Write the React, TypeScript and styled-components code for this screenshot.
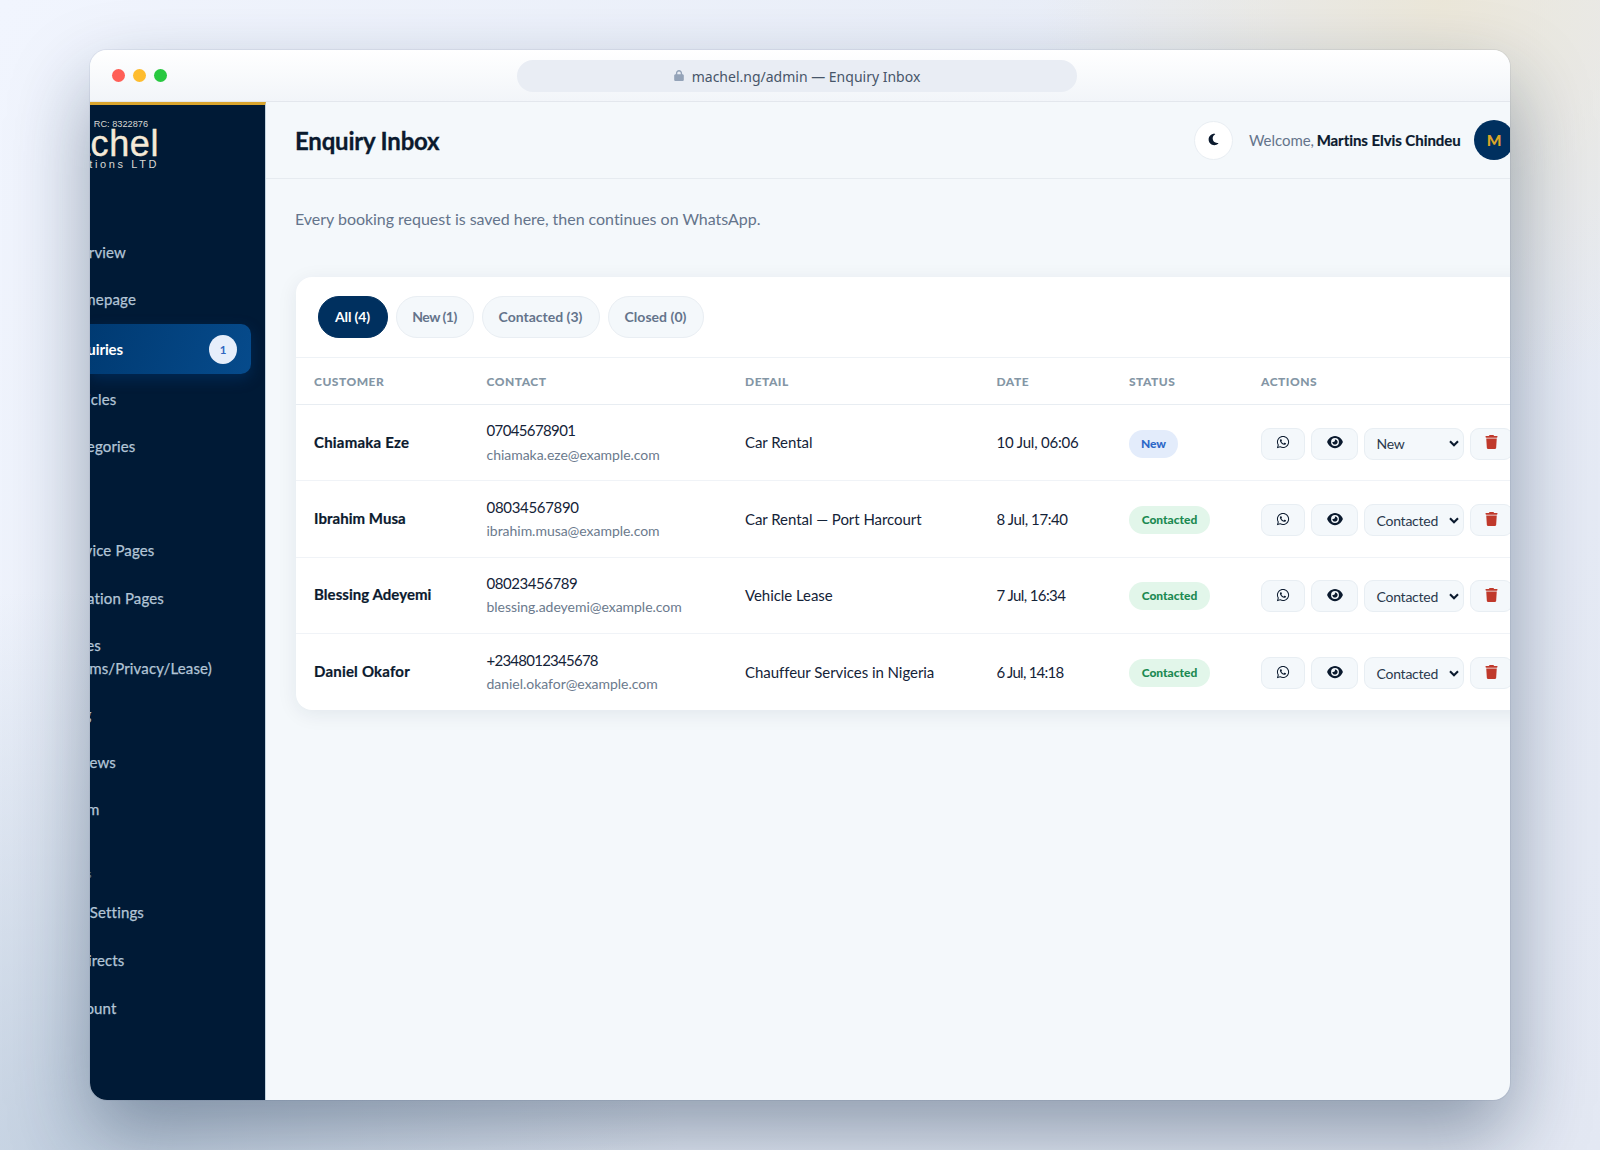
import React from "react";
import styled, { createGlobalStyle, css } from "styled-components";
import { FaEye, FaLock, FaMoon, FaTrash, FaWhatsapp } from "react-icons/fa6";

const GlobalStyle = createGlobalStyle`
  *, *::before, *::after { box-sizing: border-box; }
  body { margin: 0; overflow: hidden; }
`;

const Desktop = styled.div`
  width: 1600px;
  height: 1150px;
  padding: 50px 90px;
  overflow: hidden;
  font-family: Lato, "Liberation Sans", sans-serif;
  color: #0b1a2e;
  background:
    radial-gradient(circle at 1440px 0px, rgba(236, 230, 212, 0.85) 0, rgba(236, 230, 212, 0) 400px),
    radial-gradient(ellipse 620px 560px at 60px 1150px, rgba(182, 198, 216, 0.75) 0, rgba(182, 198, 216, 0) 100%),
    linear-gradient(120deg, #f1f5fe 0%, #e9eef8 50%, #e3e8f3 100%);
`;

const Window = styled.div`
  display: flex;
  flex-direction: column;
  width: 1420px;
  height: 1050px;
  overflow: hidden;
  border-radius: 17px;
  background: #f4f8fb;
  box-shadow: 0 36px 80px rgba(10, 36, 66, 0.4), 0 0 0 1px rgba(20, 40, 80, 0.06);
`;

const TitleBar = styled.div`
  display: flex;
  align-items: center;
  flex: none;
  height: 52px;
  padding: 0 22px;
  border-bottom: 1px solid #e3e7ed;
  background: linear-gradient(#ffffff, #f2f5f9);
`;

const Lights = styled.div`
  display: flex;
  gap: 8px;
  width: 405px;
`;

const Light = styled.span<{ $color: string }>`
  width: 13px;
  height: 13px;
  border-radius: 50%;
  background: ${(p) => p.$color};
`;

const Address = styled.div`
  display: flex;
  align-items: center;
  justify-content: center;
  gap: 8px;
  width: 560px;
  height: 32px;
  padding-top: 2px;
  border-radius: 16px;
  background: #e9edf4;
  color: #475569;
  font: 14px "Noto Sans", sans-serif;
  svg { width: 10px; height: 11px; margin-top: -2px; color: #94a3b8; }
`;

const Body = styled.div`
  display: flex;
  flex: 1;
  min-height: 0;
`;

const Sidebar = styled.aside`
  flex: none;
  width: 176px;
  border-top: 3px solid #d9a52e;
  border-right: 1px solid #c3d3df;
  background: #001a36;
  overflow: hidden;
`;

const Logo = styled.div`
  display: flex;
  flex-direction: column;
  align-items: flex-end;
  width: 67px;
  height: 124px;
  padding-top: 14px;
  font-family: "Liberation Sans", Arial, sans-serif;
  white-space: nowrap;
  color: #f5ead8;
`;

const LogoReg = styled.span`
  margin-right: 9px;
  font-size: 9.2px;
  line-height: 11px;
  color: #d9d8d4;
`;

const LogoName = styled.span`
  margin-right: -2px;
  font-size: 36px;
  line-height: 28px;
  letter-spacing: 0.6px;
  -webkit-text-stroke: 0.4px #f5ead8;
`;

const LogoSub = styled.span`
  margin-right: -2px;
  font-size: 11px;
  line-height: 12px;
  letter-spacing: 2.6px;
  color: #d9d8d4;
`;

const NavLink = styled.div<{ $end: number; $h: number; $active?: boolean; $top?: number }>`
  display: flex;
  align-items: center;
  justify-content: space-between;
  height: ${(p) => p.$h}px;
  margin: ${(p) => p.$top ?? 0}px 14px 0 0;
  padding-right: 14px;
  border-radius: 0 10px 10px 0;
  font-size: 15px;
  line-height: 23px;
  letter-spacing: 0.15px;
  color: #b3c5d6;
  -webkit-text-stroke: 0.25px currentColor;
  white-space: nowrap;
  ${(p) =>
    p.$active &&
    css`
      color: #fff;
      font-weight: 700;
      letter-spacing: -0.1px;
      -webkit-text-stroke: 0;
      background: linear-gradient(110deg, #003a72, #064b8c);
      box-shadow: 0 5px 14px rgba(0, 70, 140, 0.35);
    `}
  > span:first-child {
    display: flex;
    flex: none;
    justify-content: flex-end;
    width: ${(p) => p.$end}px;
  }
`;

const NavSection = styled.div<{ $end: number }>`
  display: flex;
  justify-content: flex-end;
  width: ${(p) => p.$end}px;
  height: 20px;
  margin-top: 31px;
  font-size: 11.5px;
  line-height: 20px;
  white-space: nowrap;
  color: #6f869c;
`;

const Count = styled.span`
  display: grid;
  place-items: center;
  width: 28px;
  height: 29px;
  border-radius: 50%;
  background: #e6eefb;
  color: #2f66c0;
  font-size: 11.5px;
  font-weight: 700;
`;

const Main = styled.main`
  flex: none;
  width: 1280px;
`;

const Header = styled.header`
  display: flex;
  align-items: center;
  height: 77px;
  padding: 0 32px 0 30px;
  border-bottom: 1px solid #e6ebf0;
`;

const PageTitle = styled.h1`
  flex: 1;
  margin: 0 0 0 -1px;
  font-size: 24px;
  font-weight: 700;
  letter-spacing: -0.2px;
  -webkit-text-stroke: 0.3px currentColor;
`;

const ThemeButton = styled.button`
  display: grid;
  place-items: center;
  width: 39px;
  height: 39px;
  margin: 0 16px 0 0;
  padding: 0 0 2px;
  border: 1px solid #e9eef3;
  border-radius: 50%;
  background: #fff;
  color: #0b1a2e;
  svg { width: 13px; height: 13px; }
`;

const Welcome = styled.div`
  width: 212px;
  margin-top: -1px;
  font-size: 15px;
  letter-spacing: -0.06px;
  color: #64748b;
  white-space: nowrap;
  b {
    margin-left: -1px;
    color: #0b1a2e;
    -webkit-text-stroke: 0.2px currentColor;
  }
`;

const Avatar = styled.div`
  display: grid;
  place-items: center;
  width: 40px;
  height: 40px;
  margin-left: 13px;
  border-radius: 50%;
  background: #00305f;
  color: #dca628;
  font-size: 15.5px;
  font-weight: 900;
`;

const Content = styled.div`
  padding: 29px 0 0 30px;
`;

const Lead = styled.p`
  margin: 0 0 47px -1px;
  font-size: 16px;
  line-height: 22px;
  letter-spacing: -0.03px;
  color: #64748b;
`;

const Card = styled.section`
  width: 1250px;
  height: 433px;
  border-radius: 16px;
  background: #fff;
  box-shadow: 0 4px 20px rgba(15, 35, 65, 0.08);
`;

const Tabs = styled.div`
  display: flex;
  gap: 8px;
  height: 81px;
  padding: 19px 22px 0;
  border-bottom: 1px solid #eef2f6;
`;

const Tab = styled.button<{ $w: number; $ls: number; $active?: boolean }>`
  width: ${(p) => p.$w}px;
  height: 42px;
  padding: 0 1px 2px 0;
  border: 1px solid ${(p) => (p.$active ? "#00305f" : "#e9eef3")};
  border-radius: 21px;
  background: ${(p) => (p.$active ? "#00305f" : "#f4f8fb")};
  color: ${(p) => (p.$active ? "#fff" : "#64748b")};
  font: 700 14px Lato, sans-serif;
  letter-spacing: ${(p) => p.$ls}px;
`;

const Row = styled.div<{ $head?: boolean }>`
  display: grid;
  grid-template-columns: 172.5px 258.5px 251.5px 132.5px 132px 1fr;
  align-items: center;
  height: 76.4px;
  padding-left: 18px;
  border-bottom: 1px solid #f0f3f7;
  font-size: 15px;
  white-space: nowrap;
  &:last-child { border-bottom: 0; }
  ${(p) =>
    p.$head &&
    css`
      height: 47px;
      border-bottom-color: #e8edf2;
      font-size: 12px;
      font-weight: 900;
      letter-spacing: 0.5px;
      color: #8496a5;
    `}
`;

const Name = styled.span<{ $ls: number }>`
  margin-top: -2px;
  font-weight: 700;
  letter-spacing: ${(p) => p.$ls}px;
  -webkit-text-stroke: 0.2px currentColor;
`;

const Contact = styled.div`
  display: flex;
  flex-direction: column;
  line-height: 23.2px;
`;

const Phone = styled.span<{ $ls: number }>`
  letter-spacing: ${(p) => p.$ls}px;
  color: #142338;
`;

const Email = styled.span`
  font-size: 14px;
  letter-spacing: -0.03px;
  color: #6b7a8d;
`;

const Detail = styled.span`
  margin-top: -1px;
  letter-spacing: -0.05px;
  color: #142338;
`;

const When = styled(Detail)<{ $ls: number }>`
  letter-spacing: ${(p) => p.$ls}px;
`;

const Badge = styled.span<{ $fresh: boolean }>`
  display: inline-flex;
  align-items: center;
  justify-content: center;
  justify-self: start;
  width: ${(p) => (p.$fresh ? 49 : 81)}px;
  height: 28px;
  margin-top: 2px;
  padding-bottom: 1px;
  border-radius: 14px;
  background: ${(p) => (p.$fresh ? "#e3ecfb" : "#e2f6ea")};
  color: ${(p) => (p.$fresh ? "#2d68c8" : "#1c8a52")};
  font-size: 12px;
  font-weight: 900;
`;

const Actions = styled.div`
  display: flex;
  gap: 6px;
  margin-top: 2px;
`;

const Action = styled.button<{ $w: number; $danger?: boolean; $icon: number }>`
  display: grid;
  place-items: center;
  width: ${(p) => p.$w}px;
  height: 32px;
  padding: 0 0 3px;
  border: 1px solid #e8eef3;
  border-radius: 9px;
  background: #f4f8fb;
  color: ${(p) => (p.$danger ? "#c0392b" : "#0b1a2e")};
  svg { width: ${(p) => p.$icon}px; height: 14px; }
`;

const Select = styled.div`
  display: flex;
  align-items: center;
  justify-content: space-between;
  width: 100px;
  height: 32px;
  padding: 0 4px 0 12px;
  margin-left: -0.5px;
  border: 1px solid #e8eef3;
  border-radius: 9px;
  background: #f4f8fb;
  color: #2a394d;
  font-size: 14px;
  letter-spacing: -0.25px;
  svg { width: 10px; height: 7px; color: #0b1a2e; }
`;

type Link = { end: number; text: string; second?: string; h: number; top?: number; count?: number };

const primary: Link[] = [
  { text: "Overview", end: 36, h: 47 },
  { text: "Homepage", end: 46, h: 47 },
  { text: "Enquiries", end: 33, h: 50, top: 1, count: 1 },
  { text: "Vehicles", end: 26.5, h: 47, top: 2 },
  { text: "Categories", end: 45.5, h: 47 },
  { text: "Service Pages", end: 64.5, h: 47, top: 57 },
  { text: "Location Pages", end: 74, h: 48 },
  { text: "Pages", second: "(Terms/Privacy/Lease)", end: 122, h: 69 },
  { text: "Blog", end: 1.5, h: 47 },
  { text: "Reviews", end: 26, h: 47, top: 1 },
  { text: "Team", end: 9.5, h: 47 },
];

const settings: Link[] = [
  { text: "Site Settings", end: 54, h: 47, top: 5 },
  { text: "Redirects", end: 34.5, h: 49 },
  { text: "Account", end: 26.5, h: 46 },
];

const tabs = [
  { text: "All (4)", w: 70, ls: -0.1 },
  { text: "New (1)", w: 78, ls: -0.5 },
  { text: "Contacted (3)", w: 118, ls: 0 },
  { text: "Closed (0)", w: 96, ls: 0.05 },
];

const enquiries = [
  { name: "Chiamaka Eze", ls: 0.22, phone: "07045678901", pls: -0.63, email: "chiamaka.eze@example.com", detail: "Car Rental", when: "10 Jul, 06:06", wls: -0.2, status: "New" },
  { name: "Ibrahim Musa", ls: 0.05, phone: "08034567890", pls: -0.32, email: "ibrahim.musa@example.com", detail: "Car Rental — Port Harcourt", when: "8 Jul, 17:40", wls: -0.4, status: "Contacted" },
  { name: "Blessing Adeyemi", ls: 0.05, phone: "08023456789", pls: -0.45, email: "blessing.adeyemi@example.com", detail: "Vehicle Lease", when: "7 Jul, 16:34", wls: -0.6, status: "Contacted" },
  { name: "Daniel Okafor", ls: 0.2, phone: "+2348012345678", pls: -0.75, email: "daniel.okafor@example.com", detail: "Chauffeur Services in Nigeria", when: "6 Jul, 14:18", wls: -0.75, status: "Contacted" },
];

const Stacked = styled.span`
  display: flex;
  flex-direction: column;
  align-items: flex-end;
  > em { font-style: normal; padding-right: 111px; }
`;

function NavItem({ link }: { link: Link }) {
  return (
    <NavLink $end={link.end} $h={link.h} $top={link.top} $active={!!link.count}>
      <span>
        {link.second ? (
          <Stacked>
            <em>{link.text}</em>
            <span>{link.second}</span>
          </Stacked>
        ) : (
          link.text
        )}
      </span>
      {link.count && <Count>{link.count}</Count>}
    </NavLink>
  );
}

export default function App() {
  return (
    <Desktop>
      <GlobalStyle />
      <Window>
        <TitleBar>
          <Lights>
            <Light $color="#ff5f57" />
            <Light $color="#febc2e" />
            <Light $color="#28c840" />
          </Lights>
          <Address>
            <FaLock />
            machel.ng/admin — Enquiry Inbox
          </Address>
        </TitleBar>
        <Body>
          <Sidebar>
            <Logo>
              <LogoReg>RC: 8322876</LogoReg>
              <LogoName>Machel</LogoName>
              <LogoSub>Solutions LTD</LogoSub>
            </Logo>
            <nav>
              {primary.map((l) => <NavItem key={l.text} link={l} />)}
              <NavSection $end={1.5}>Settings</NavSection>
              {settings.map((l) => <NavItem key={l.text} link={l} />)}
            </nav>
          </Sidebar>
          <Main>
            <Header>
              <PageTitle>Enquiry Inbox</PageTitle>
              <ThemeButton><FaMoon /></ThemeButton>
              <Welcome>Welcome, <b>Martins Elvis Chindeu</b></Welcome>
              <Avatar>M</Avatar>
            </Header>
            <Content>
              <Lead>Every booking request is saved here, then continues on WhatsApp.</Lead>
              <Card>
                <Tabs>
                  {tabs.map((t, i) => (
                    <Tab key={t.text} $w={t.w} $ls={t.ls} $active={i === 0}>{t.text}</Tab>
                  ))}
                </Tabs>
                <Row $head>
                  <span>CUSTOMER</span>
                  <span>CONTACT</span>
                  <span>DETAIL</span>
                  <span>DATE</span>
                  <span>STATUS</span>
                  <span>ACTIONS</span>
                </Row>
                {enquiries.map((e) => (
                  <Row key={e.name}>
                    <Name $ls={e.ls}>{e.name}</Name>
                    <Contact>
                      <Phone $ls={e.pls}>{e.phone}</Phone>
                      <Email>{e.email}</Email>
                    </Contact>
                    <Detail>{e.detail}</Detail>
                    <When $ls={e.wls}>{e.when}</When>
                    <Badge $fresh={e.status === "New"}>{e.status}</Badge>
                    <Actions>
                      <Action $w={44} $icon={14}><FaWhatsapp /></Action>
                      <Action $w={47} $icon={16}><FaEye /></Action>
                      <Select>
                        {e.status}
                        <svg viewBox="0 0 10 7" fill="none" stroke="currentColor" strokeWidth="2.1">
                          <path d="M1 1.2 5 5.2 9 1.2" />
                        </svg>
                      </Select>
                      <Action $w={43} $icon={13} $danger><FaTrash /></Action>
                    </Actions>
                  </Row>
                ))}
              </Card>
            </Content>
          </Main>
        </Body>
      </Window>
    </Desktop>
  );
}
